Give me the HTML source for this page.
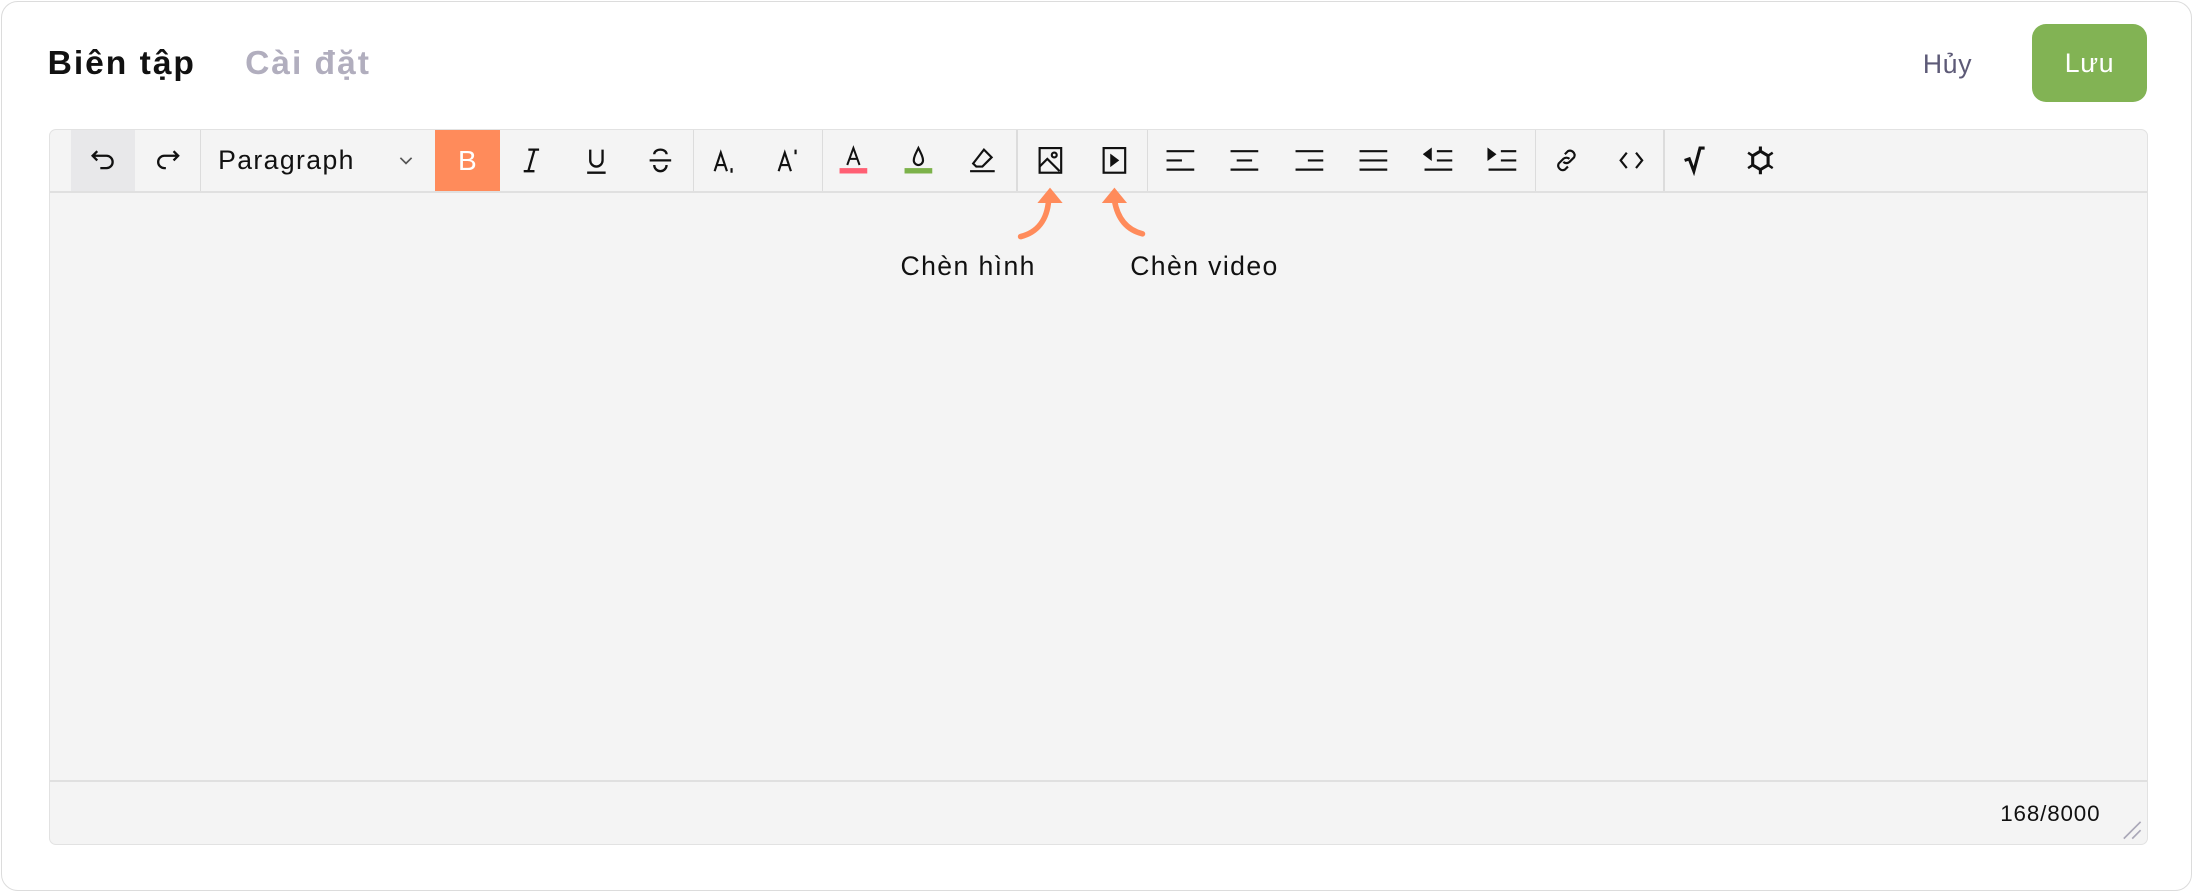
<!DOCTYPE html>
<html><head><meta charset="utf-8">
<style>
html,body{margin:0;padding:0;background:#fff;}
body{width:2196px;height:894px;overflow:hidden;}
#w{zoom:1.40051;width:1568px;height:638px;position:relative;font-family:"Liberation Sans",sans-serif;}
.card{position:absolute;left:1px;top:1px;width:1563px;height:634px;border:1px solid #dcdcdc;border-radius:12px;background:#fff;}
.t{position:absolute;font-weight:bold;font-size:24px;top:32px;letter-spacing:1.4px;}
.ed{position:absolute;left:35px;top:92px;width:1497px;height:510px;background:#f4f4f4;border:1px solid #e2e2e2;border-radius:5px;}
.tb{position:absolute;left:0;top:0;right:0;height:44px;border-bottom:2px solid #e0e0e0;}
.b{position:absolute;top:0;width:46px;height:44px;}
.b svg{position:absolute;left:12px;top:11px;width:22px;height:22px;}
.sep{position:absolute;top:0;width:1px;height:44px;background:#dcdcdc;}
.ft{position:absolute;left:0;right:0;top:464px;border-top:2px solid #e0e0e0;}
.lab{position:absolute;top:179px;font-size:19px;color:#111;letter-spacing:1px}
</style></head><body><div id="w">
<div class="card"></div>
<div class="t" style="left:34px;color:#111">Biên tập</div>
<div class="t" style="left:175px;color:#b1aebe">Cài đặt</div>
<div style="position:absolute;left:1373px;top:35px;font-size:19px;color:#5d5a77;letter-spacing:.5px">Hủy</div>
<div style="position:absolute;left:1451px;top:17px;width:82px;height:56px;background:#82b354;border-radius:10px;color:#fff;font-size:19px;text-align:center;line-height:56px;letter-spacing:.5px">Lưu</div>
<div class="ed">
<div class="tb">
<div class="b" style="left:15px;background:#e8e8ea"><svg viewBox="0 0 20 20" fill="none" stroke="#111" stroke-width="1.5"><path d="M6 4L3 7l3 3M3 7h9a4 4 0 010 8H8"/></svg></div>
<div class="b" style="left:61px"><svg viewBox="0 0 20 20" fill="none" stroke="#111" stroke-width="1.5"><path d="M14 4l3 3-3 3M17 7H8a4 4 0 000 8h1"/></svg></div>
<div class="sep" style="left:107px"></div>
<div style="position:absolute;left:120px;top:11px;font-size:19px;color:#111;letter-spacing:1px">Paragraph</div>
<svg style="position:absolute;left:249px;top:18px" width="10" height="8" viewBox="0 0 10 8" fill="none" stroke="#555" stroke-width="1.2"><path d="M1 2l4 4 4-4"/></svg>
<div class="b" style="left:275px;background:#ff8b5b"><div style="position:absolute;left:0;right:0;top:11px;text-align:center;color:#fff;font-size:20px">B</div></div>
<div class="b" style="left:321px"><svg viewBox="0 0 20 20" fill="none" stroke="#111" stroke-width="1.5"><path d="M8 3h7M5 17h7M12 3L8 17"/></svg></div>
<div class="b" style="left:367px"><svg viewBox="0 0 20 20" fill="none" stroke="#111" stroke-width="1.5"><path d="M6 3v7a4 4 0 008 0V3M4 18h12"/></svg></div>
<div class="b" style="left:413px"><svg viewBox="0 0 20 20" fill="none" stroke="#111" stroke-width="1.5"><path d="M14 6a4 3 0 00-8 0M3 10h14M6 13a4 4 0 008 0"/></svg></div>
<div class="sep" style="left:459px"></div>
<div class="b" style="left:459px"><svg viewBox="0 0 20 20" fill="none" stroke="#111" stroke-width="1.4"><path d="M3 17L7 5l4 12M4.5 13h5M14 15v3"/></svg></div>
<div class="b" style="left:505px"><svg viewBox="0 0 20 20" fill="none" stroke="#111" stroke-width="1.4"><path d="M3 17L7 5l4 12M4.5 13h5M14 3v3"/></svg></div>
<div class="sep" style="left:551px"></div>
<div class="b" style="left:551px"><svg viewBox="0 0 20 20" fill="none" stroke="#111" stroke-width="1.3"><path d="M6 13L10 2l4 11M7.3 9h5.4"/><rect x="1" y="15" width="18" height="3.5" fill="#ff5f73" stroke="none"/></svg></div>
<div class="b" style="left:597px"><svg viewBox="0 0 20 20" fill="none" stroke="#111" stroke-width="1.4"><path d="M10 2C8 6 7 8 7 10a3 3 0 006 0c0-2-1-4-3-8z"/><rect x="1" y="15" width="18" height="3.5" fill="#7cb24a" stroke="none"/></svg></div>
<div class="b" style="left:643px"><svg viewBox="0 0 20 20" fill="none" stroke="#111" stroke-width="1.4"><path d="M11 3l5 5-6 6H6l-2-2 7-9zM2 17h16"/></svg></div>
<div class="sep" style="left:690px"></div>
<div class="b" style="left:691px"><svg viewBox="0 0 20 20" fill="none" stroke="#111" stroke-width="1.4"><rect x="3" y="2" width="14" height="16"/><circle cx="12.5" cy="6.5" r="1.6"/><path d="M3 14l5-5 8 8"/></svg></div>
<div class="b" style="left:737px"><svg viewBox="0 0 20 20" fill="none" stroke="#111" stroke-width="1.4"><rect x="3" y="2" width="14" height="16"/><path d="M8 7l4 3-4 3z" fill="#111"/></svg></div>
<div class="sep" style="left:783px"></div>
<div class="b" style="left:784px"><svg viewBox="0 0 20 20" fill="none" stroke="#111" stroke-width="1.4"><path d="M1 4h18M1 10h10M1 16h18"/></svg></div>
<div class="b" style="left:830px"><svg viewBox="0 0 20 20" fill="none" stroke="#111" stroke-width="1.4"><path d="M1 4h18M5 10h10M1 16h18"/></svg></div>
<div class="b" style="left:876px"><svg viewBox="0 0 20 20" fill="none" stroke="#111" stroke-width="1.4"><path d="M1 4h18M9 10h10M1 16h18"/></svg></div>
<div class="b" style="left:922px"><svg viewBox="0 0 20 20" fill="none" stroke="#111" stroke-width="1.4"><path d="M1 4h18M1 10h18M1 16h18"/></svg></div>
<div class="b" style="left:968px"><svg viewBox="0 0 20 20" fill="none" stroke="#111" stroke-width="1.4"><path d="M9 4h10M9 10h10M1 16h18"/><path d="M5 3v6L1 6z" fill="#111"/></svg></div>
<div class="b" style="left:1014px"><svg viewBox="0 0 20 20" fill="none" stroke="#111" stroke-width="1.4"><path d="M9 4h10M9 10h10M1 16h18"/><path d="M1 3v6l4-3z" fill="#111"/></svg></div>
<div class="sep" style="left:1060px"></div>
<div class="b" style="left:1060px"><svg viewBox="0 0 20 20" fill="none" stroke="#111" stroke-width="1.4"><path d="M9 6l2-2a3 3 0 014 4l-3 3a3 3 0 01-4 0M11 14l-2 2a3 3 0 01-4-4l3-3a3 3 0 014 0"/></svg></div>
<div class="b" style="left:1106px"><svg viewBox="0 0 20 20" fill="none" stroke="#111" stroke-width="1.4"><path d="M7 5l-4 5 4 5M13 5l4 5-4 5"/></svg></div>
<div class="sep" style="left:1152px"></div>
<div class="b" style="left:1152px"><svg viewBox="0 0 20 20" fill="none" stroke="#111" stroke-width="2"><path d="M3 10l3-1 3 8 4-15h3"/></svg></div>
<div class="b" style="left:1198px"><svg viewBox="0 0 20 20" fill="none" stroke="#111" stroke-width="2"><path d="M10 1v3M10 16v3M10 4l5 3v6l-5 3-5-3V7z"/><path d="M5 7L2 5M15 7l3-2M5 13l-3 2M15 13l3 2" stroke-width="1.6"/></svg></div>
</div>
<div class="ft"></div>
<div style="position:absolute;right:33px;top:479px;font-size:16px;color:#111;letter-spacing:.6px">168/8000</div>
<svg style="position:absolute;right:2px;bottom:2px" width="16" height="16" viewBox="0 0 16 16" stroke="#aaa8b8" stroke-width="1.2"><path d="M2 14L14 2M8 14l6-6"/></svg>
</div>
<svg style="position:absolute;left:720px;top:130px" width="110" height="45" viewBox="720 130 110 45" fill="none">
<path d="M729 169c12-3 19-12 20-26" stroke="#ff8b5b" stroke-width="4" stroke-linecap="round"/>
<path d="M741 145l9-11 9 11z" fill="#ff8b5b"/>
<path d="M816 167c-12-3-18-12-20-24" stroke="#ff8b5b" stroke-width="4" stroke-linecap="round"/>
<path d="M787 145l9-11 9 11z" fill="#ff8b5b"/>
</svg>
<div class="lab" style="left:643px">Chèn hình</div>
<div class="lab" style="left:807px">Chèn video</div>
</div></body></html>
